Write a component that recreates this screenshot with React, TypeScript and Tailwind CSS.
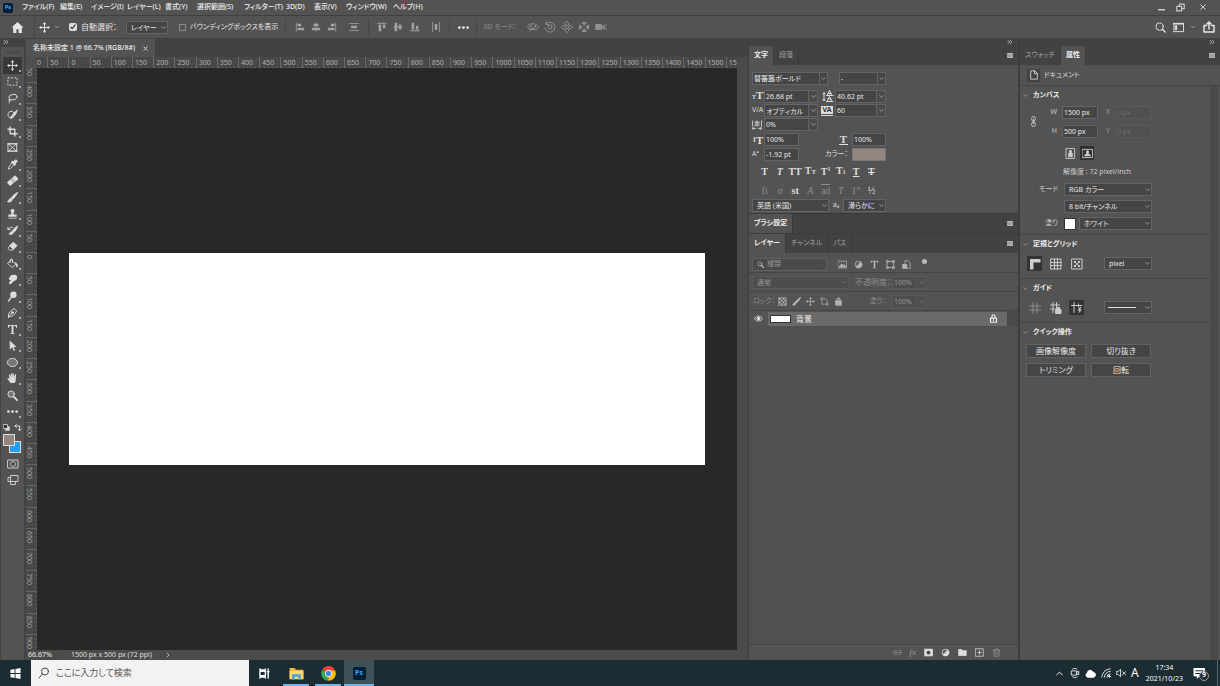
import type { ReactNode } from 'react'
import { ChevronDown, ChevronRight, ChevronUp, ChevronsRight, Link2, Trash2 } from 'lucide-react'

type IconProps = { children: ReactNode; className?: string }

// stroked icon on a 24 grid; shapes can opt in to fill with fill="currentColor"
function Icon({ children, className = 'size-[12px]' }: IconProps) {
  return (
    <svg
      viewBox="0 0 24 24"
      fill="none"
      stroke="currentColor"
      strokeWidth="2"
      strokeLinecap="round"
      strokeLinejoin="round"
      aria-hidden="true"
      className={`shrink-0 ${className}`}
    >
      {children}
    </svg>
  )
}

const moveShape = (
  <>
    <path d="M12 3v18M3 12h18" />
    <path d="M12 0l4 5H8zM12 24l4-5H8zM0 12l5-4v8zM24 12l-5-4v8z" fill="currentColor" stroke="none" />
  </>
)

const lockShape = (
  <>
    <rect x="4" y="10" width="16" height="12" rx="1" fill="currentColor" />
    <path d="M8 10V7a4 4 0 0 1 8 0v3" strokeWidth="3" />
  </>
)

const halfCircle = (
  <>
    <circle cx="12" cy="12" r="9" />
    <path d="M18.4 5.6A9 9 0 0 1 5.6 18.4z" fill="currentColor" />
  </>
)

const tools: { name: string; shape: ReactNode; more?: boolean }[] = [
  { name: '移動', shape: moveShape, more: true },
  { name: '長方形選択', shape: <rect x="2" y="4" width="20" height="16" strokeDasharray="4 3" strokeLinecap="butt" />, more: true },
  {
    name: 'なげなわ',
    shape: (
      <>
        <ellipse cx="13" cy="9" rx="9" ry="6" transform="rotate(-12 13 9)" />
        <path d="M6 14c-3 0-3 4 0 3.500 2-.5 1-3.500-1-2.500M6 18c1 2-1 3-2 4" />
      </>
    ),
    more: true,
  },
  {
    name: 'クイック選択',
    shape: (
      <>
        <path d="M10 20c-10 0-11-14-1-15 3 0 5 1 6 3" />
        <path d="M22 3c-4 2-8 6-10 10l3 3c3-3 6-8 7-13zM11 14c-2 1-1 4-4 5 4 2 7 0 7-3z" fill="currentColor" />
      </>
    ),
    more: true,
  },
  { name: '切り抜き', shape: <path d="M7 1v16h16M1 7h16v16" strokeWidth="3" strokeLinecap="butt" />, more: true },
  { name: 'フレーム', shape: <path d="M3 4h18v16H3zM3 4l18 16M21 4L3 20M1 4h22M1 20h22" /> },
  {
    name: 'スポイト',
    shape: (
      <>
        <path d="M13 7l4 4L7 21l-4 1 1-4z" />
        <path d="M12 5l2 1 3-3c3-3 7 1 4 4l-3 3 1 2-2 2-7-7z" fill="currentColor" />
      </>
    ),
    more: true,
  },
  {
    name: '修復ブラシ',
    shape: (
      <>
        <rect x="0" y="7" width="24" height="11" rx="2" transform="rotate(-40 12 12)" fill="currentColor" stroke="none" />
        <path d="M7 8l9 10M10 6l8 10" stroke="#535353" strokeWidth="1" />
      </>
    ),
    more: true,
  },
  {
    name: 'ブラシ',
    shape: <path d="M23 1C17 4 12 9 9 13l3 3c4-4 9-9 11-15zM8 14c-4 0-3 5-7 7 5 2 10 0 10-4z" fill="currentColor" />,
    more: true,
  },
  {
    name: 'スタンプ',
    shape: <path d="M12 2a4 4 0 0 0-3 7c1 2 1 4 0 5H3v5h18v-5h-6c-1-1-1-3 0-5a4 4 0 0 0-3-7zM3 21h18v2H3z" fill="currentColor" stroke="none" />,
    more: true,
  },
  {
    name: 'ヒストリーブラシ',
    shape: (
      <>
        <path d="M23 3c-6 2-9 6-11 10l3 3c4-4 7-8 8-13zM11 14c-4 0-3 4-7 5 4 3 9 1 10-2z" fill="currentColor" />
        <path d="M2 5v5h5M3 9c2-4 6-5 9-4" />
      </>
    ),
    more: true,
  },
  {
    name: '消しゴム',
    shape: (
      <>
        <path d="M14 3l8 7-8 8-8-7z" fill="currentColor" />
        <path d="M6 11l-4 5 4 4h5l3-2" />
      </>
    ),
    more: true,
  },
  {
    name: '塗りつぶし',
    shape: (
      <>
        <path d="M10 5l9 9-8 7-9-9zM7 10V4c0-3 5-3 5 0v5" />
        <path d="M19 11c5 2 4 7 3 9-2-1-2-5-3-9z" fill="currentColor" />
      </>
    ),
    more: true,
  },
  {
    name: '指先',
    shape: <path d="M4 10c2-4 6-9 9-8 4-1 8 0 9 4 1 5-3 9-7 9l-6 6c-3 3-6 0-4-3l4-5c-2 1-5 0-5-3z" fill="currentColor" stroke="none" />,
    more: true,
  },
  {
    name: '覆い焼き',
    shape: (
      <>
        <circle cx="14" cy="8" r="7" fill="currentColor" stroke="none" />
        <path d="M10 13l-7 9" strokeWidth="3" />
      </>
    ),
    more: true,
  },
  {
    name: 'ペン',
    shape: (
      <>
        <path d="M3 22c0-7 2-12 7-15l6-4 5 6-4 6c-3 4-8 6-14 7zM4 21l7-8" />
        <circle cx="12" cy="12" r="2" fill="currentColor" />
      </>
    ),
    more: true,
  },
  { name: '文字', shape: <path d="M2 2h20v6h-2c0-3-2-4-6-4v15c0 1 1 2 3 2v1H7v-1c2 0 3-1 3-2V4C6 4 4 5 4 8H2z" fill="currentColor" stroke="none" />, more: true },
  { name: 'パス選択', shape: <path d="M6 1v20l5-5 4 8 3-2-4-7h7z" fill="currentColor" stroke="none" />, more: true },
  { name: '楕円形', shape: <ellipse cx="12" cy="12" rx="11" ry="9" fill="#777777" />, more: true },
  {
    name: '手のひら',
    shape: (
      <path
        d="M8 22C5 18 2 15 1 12c1-2 3-1 5 2L4 5c0-2 3-2 3 0l2 6-1-9c0-2 3-2 3 0l1 9V2c0-2 3-2 3 0v9l2-7c1-2 3-1 3 1l-1 9c0 4-1 6-3 8z"
        fill="currentColor"
        stroke="none"
      />
    ),
    more: true,
  },
  {
    name: 'ズーム',
    shape: (
      <>
        <circle cx="9" cy="9" r="7" fill="#777777" />
        <path d="M15 15l7 7" strokeWidth="4" />
      </>
    ),
  },
  {
    name: 'その他',
    shape: (
      <g fill="currentColor" stroke="none">
        <circle cx="3" cy="12" r="3" />
        <circle cx="12" cy="12" r="3" />
        <circle cx="21" cy="12" r="3" />
      </g>
    ),
    more: true,
  },
]

const menus = ['ファイル(F)', '編集(E)', 'イメージ(I)', 'レイヤー(L)', '書式(Y)', '選択範囲(S)', 'フィルター(T)', '3D(D)', '表示(V)', 'ウィンドウ(W)', 'ヘルプ(H)']

const field = 'h-[13px] border border-[#646464] bg-[#454545] text-[7px] leading-[11px] text-[#e6e6e6] outline-none'

type SelectProps = { label: string; value: string; className?: string; muted?: boolean; split?: boolean }

function Select({ label, value, className = '', muted = false, split = false }: SelectProps) {
  return (
    <span className={`relative block ${muted ? 'opacity-40' : ''} ${className}`}>
      <select
        aria-label={label}
        disabled={muted}
        className={`${field} block w-full appearance-none pr-2 disabled:opacity-100 ${split ? 'pl-px' : 'pl-1'}`}
      >
        <option>{value}</option>
      </select>
      <span className={`pointer-events-none absolute inset-y-px right-px flex w-[8px] items-center justify-center ${split ? 'border-l border-[#646464]' : ''}`}>
        <ChevronDown className="size-[7px] text-[#cccccc]" />
      </span>
    </span>
  )
}

function Combo({ label, value, className = '', muted = false }: { label: string; value: string; className?: string; muted?: boolean }) {
  return (
    <span className={`flex ${muted ? 'opacity-40' : ''} ${className}`}>
      <input aria-label={label} defaultValue={value} disabled={muted} className={`${field} w-0 flex-1 px-px`} />
      <button aria-label={`${label}の候補`} disabled={muted} className="flex h-[13px] w-[9px] items-center justify-center border border-l-0 border-[#646464] bg-[#4b4b4b]">
        <ChevronDown className="size-[7px] text-[#cccccc]" />
      </button>
    </span>
  )
}

function PanelMenu() {
  return (
    <button aria-label="パネルメニュー" className="mr-[5px] h-[5px] w-[6px] border-y border-[#b5b5b5] bg-[#a0a0a0]" />
  )
}

function Tabs({ items, active }: { items: string[]; active: number }) {
  return (
    <div className="flex h-[19px] shrink-0 items-center justify-between bg-[#424242]">
      <div role="tablist" className="flex h-full">
        {items.map((item, i) => (
          <button
            key={item}
            role="tab"
            aria-selected={i === active}
            className={`h-full border-r border-[#3a3a3a] px-[5px] text-[7px] ${i === active ? 'bg-[#535353] font-semibold text-[#eeeeee]' : 'text-[#a0a0a0]'}`}
          >
            {item}
          </button>
        ))}
      </div>
      <PanelMenu />
    </div>
  )
}

function MenuBar() {
  return (
    <header className="flex h-[16px] shrink-0 items-center border-b border-[#404040] bg-[#535353]">
      <span className="ml-[3px] flex size-[10px] items-center justify-center rounded-[2px] bg-[#001e36] text-[6px] font-bold text-[#31a8ff]">Ps</span>
      <nav className="ml-[9px] grid grid-cols-[38px_31px_36px_38px_32px_47px_42px_28px_32px_47px_40px] text-[7px] font-medium text-[#eeeeee]">
        {menus.map((menu) => (
          <button key={menu} className="whitespace-nowrap text-left">
            {menu}
          </button>
        ))}
      </nav>
      <div className="mr-[4px] ml-auto flex text-[#cccccc]">
        <button aria-label="最小化" className="flex w-[18px] justify-center">
          <Icon className="size-[9px]"><path d="M4 18h16" strokeWidth="4" /></Icon>
        </button>
        <button aria-label="元に戻す" className="flex w-[20px] justify-center">
          <Icon className="size-[9px]"><path d="M2 9h13v12H2zM9 9V3h13v12h-7" strokeWidth="3" /></Icon>
        </button>
        <button aria-label="閉じる" className="flex w-[26px] justify-center">
          <Icon className="size-[8px]"><path d="M5 5l14 14M19 5L5 19" strokeWidth="3" /></Icon>
        </button>
      </div>
    </header>
  )
}

const alignIcons: { name: string; width: string; shape: ReactNode }[] = [
  { name: '左揃え', width: 'w-[16px]', shape: <path d="M2 1h2v22H2zM6 4h9v6H6zM6 14h16v6H6z" /> },
  { name: '水平中央', width: 'w-[16px]', shape: <path d="M11 1h2v22h-2zM6 4h12v6H6zM2 14h20v6H2z" /> },
  { name: '右揃え', width: 'w-[16px]', shape: <path d="M20 1h2v22h-2zM9 4h9v6H9zM2 14h16v6H2z" /> },
  { name: '水平分布', width: 'w-[28px]', shape: <path d="M0 3h24v2H0zM5 9h14v6H5zM0 19h24v2H0z" /> },
]

const verticalIcons: { name: string; width: string; shape: ReactNode }[] = [
  { name: '上揃え', width: 'w-[16px]', shape: <path d="M1 2h22v2H1zM4 6h6v16H4zM14 6h6v9h-6z" /> },
  { name: '垂直中央', width: 'w-[16px]', shape: <path d="M1 11h22v2H1zM4 2h6v20H4zM14 6h6v12h-6z" /> },
  { name: '下揃え', width: 'w-[17px]', shape: <path d="M1 20h22v2H1zM4 2h6v16H4zM14 9h6v9h-6z" /> },
  { name: '垂直分布', width: 'w-[26px]', shape: <path d="M3 0h2v24H3zM9 5h6v14H9zM19 0h2v24h-2z" /> },
]

function AlignGroup({ items }: { items: typeof alignIcons }) {
  return (
    <div className="flex text-[#a2a2a2]">
      {items.map(({ name, width, shape }) => (
        <button key={name} aria-label={name} className={`flex justify-center ${width}`}>
          <Icon className="size-[10px]"><g fill="currentColor" stroke="none">{shape}</g></Icon>
        </button>
      ))}
    </div>
  )
}

function OptionsBar() {
  return (
    <div className="flex h-[22px] shrink-0 items-center bg-[#535353] text-[#e6e6e6]">
      <button aria-label="ホーム" className="ml-[11px] w-[23px]">
        <Icon className="size-[13px]"><path d="M12 2L1 12h3v10h6v-7h4v7h6V12h3z" fill="currentColor" stroke="none" /></Icon>
      </button>
      <i className="h-full w-px bg-[#464646]" />
      <button aria-label="移動ツール" className="ml-[4px] flex w-[21px] items-center justify-between">
        <Icon className="size-[11px]">{moveShape}</Icon>
        <ChevronDown className="size-[6px]" />
      </button>
      <label className="ml-[9px] flex items-center gap-1 text-[8px]">
        <input type="checkbox" defaultChecked className="size-[8px] accent-[#e0e0e0]" />
        自動選択：
      </label>
      <Select label="自動選択の対象" value="レイヤー" className="ml-[9px] w-[42px]" />
      <label className="ml-[11px] flex items-center gap-1 text-[7px]">
        <input type="checkbox" className="size-[7px] appearance-none border border-[#8a8a8a]" />
        バウンディングボックスを表示
      </label>
      <i className="mr-[6px] ml-[7px] h-4 w-px bg-[#464646]" />
      <AlignGroup items={alignIcons} />
      <i className="mr-[5px] h-4 w-px bg-[#464646]" />
      <AlignGroup items={verticalIcons} />
      <i className="h-4 w-px bg-[#464646]" />
      <button aria-label="その他のオプション" className="flex w-[26px] justify-center">
        <Icon className="size-[11px]">{tools[21].shape}</Icon>
      </button>
      <i className="h-4 w-px bg-[#464646]" />
      <span className="ml-[6px] w-[41px] text-[7px] whitespace-nowrap text-[#8e8e8e]">3D モード：</span>
      <div className="ml-[3px] flex gap-[5px] text-[#8e8e8e]">
        <Icon>
          <circle cx="12" cy="10" r="5" />
          <path d="M6 6C0 8 0 16 7 17h10c7-1 7-8 2-9M5 14l3 3-3 3" />
        </Icon>
        <Icon>
          <circle cx="12" cy="12" r="4" />
          <path d="M4 6a10 10 0 1 1-2 8M4 2v5h5" />
        </Icon>
        <Icon>
          <path d="M12 1l4 5-4 4-4-4zM12 23l4-5-4-4-4 4zM1 12l5-4 4 4-4 4zM23 12l-5-4-4 4 4 4z" />
        </Icon>
        <Icon>
          <path d="M12 8L8 3h8zM12 16l-4 5h8zM8 12L3 8v8zM16 12l5-4v8z" fill="currentColor" />
        </Icon>
        <Icon>
          <path d="M1 7h12v10H1z" fill="currentColor" />
          <path d="M15 12l3-4v8zM23 6l-3 4M23 18l-3-4" fill="currentColor" />
        </Icon>
      </div>
      <div className="mr-[5px] ml-auto flex items-center gap-[7px]">
        <button aria-label="検索">
          <Icon className="size-[11px]"><circle cx="10" cy="10" r="8" /><path d="M16 16l6 6" strokeWidth="3" /></Icon>
        </button>
        <button aria-label="ワークスペース" className="flex items-center gap-[6px]">
          <Icon className="size-[11px]"><path d="M1 3h22v18H1z" /><path d="M5 8h3v9H5z" fill="currentColor" /><path d="M1 4h22" strokeWidth="3" /></Icon>
          <ChevronDown className="size-[6px]" />
        </button>
        <button aria-label="共有">
          <Icon className="size-[12px]"><path d="M7 9H2v13h20V9h-5M12 16V2M8 6l4-4 4 4" strokeWidth="3" /></Icon>
        </button>
      </div>
    </div>
  )
}

function Toolbar() {
  return (
    <aside className="flex w-[26px] shrink-0 flex-col border-r-2 border-l border-[#444444] bg-[#535353]">
      <div className="h-[9px] bg-[#424242] text-[#dddddd]"><ChevronsRight className="ml-px size-[8px]" /></div>
      <div className="flex h-[10px] items-center justify-center"><i className="h-[3px] w-[14px] bg-[#4b4b4b]" /></div>
      <div className="flex h-[363px] flex-col items-center">
        {tools.map(({ name, shape, more }, i) => (
          <button
            key={name}
            aria-label={name}
            className={`relative flex w-[19px] flex-1 items-center justify-center text-[#dddddd] ${i === 0 ? 'bg-[#383838]' : ''}`}
          >
            <Icon className="size-[11px]">{shape}</Icon>
            {more && <i className="absolute right-px bottom-[2px] size-[2px] bg-[#aaaaaa]" />}
          </button>
        ))}
      </div>
      <div className="mt-[3px] flex h-[9px] items-center justify-around text-[#dddddd]">
        <Icon className="size-[7px]"><path d="M9 9h13v13H9z" fill="currentColor" /><path d="M2 2h13v13H2z" fill="#222222" strokeWidth="3" /></Icon>
        <Icon className="size-[8px]"><path d="M3 6h14v13M7 2L3 6l4 4M13 16l4 4 4-4" strokeWidth="3" /></Icon>
      </div>
      <div className="relative mt-[2px] ml-[2px] h-[19px] w-[18px]">
        <button aria-label="背景色" className="absolute right-0 bottom-0 size-[12px] border border-[#dddddd] bg-[#1ea0f5]" />
        <button aria-label="描画色" className="absolute top-0 left-0 size-[12px] border border-[#dddddd] bg-[#93857f]" />
      </div>
      <button aria-label="クイックマスク" className="mt-[4px] flex h-[14px] items-center justify-center text-[#cccccc]">
        <Icon><path d="M2 4h20v16H2z" /><circle cx="12" cy="12" r="5" strokeDasharray="3 2" /></Icon>
      </button>
      <button aria-label="スクリーンモード" className="mt-[2px] flex h-[14px] items-center justify-center text-[#cccccc]">
        <Icon><path d="M7 15H2V7h5M8 3h14v12H8zM7 12v9h10v-5" /></Icon>
      </button>
    </aside>
  )
}

const columns = Array.from({ length: 34 }, (_, i) => Math.abs((i - 2) * 50))
const rows = Array.from({ length: 28 }, (_, i) => Math.abs((i - 9) * 50))

function Document() {
  return (
    <main className="flex min-w-0 flex-1 flex-col bg-[#424242]">
      <div className="flex h-[19px] shrink-0 items-end">
        <div role="tab" aria-selected="true" className="flex h-[18px] items-center gap-[8px] bg-[#535353] pr-[7px] pl-[7px] text-[7px] font-medium text-[#eeeeee]">
          <span className="whitespace-nowrap">名称未設定 1 @ 66.7% (RGB/8#)</span>
          <button aria-label="タブを閉じる"><Icon className="size-[5px]"><path d="M4 4l16 16M20 4L4 20" strokeWidth="4" /></Icon></button>
        </div>
      </div>
      <div className="flex min-h-0 flex-1">
        <div className="flex min-w-0 flex-1 flex-col">
          <div className="flex h-[11px] shrink-0 bg-[#484848] text-[7px] leading-[11px] text-[#b0b0b0]">
            <span className="w-[11px] shrink-0 bg-[#505050]" />
            <div className="flex-1 overflow-hidden">
              <div className="-ml-[11px] flex w-[721px]">
                {columns.map((n, i) => (
                  <span key={i} className="w-0 flex-1 border-l border-[#6a6a6a] pl-[2px] [background:repeating-linear-gradient(90deg,#6a6a6a_0_1px,transparent_1px_4px)_left_bottom/100%_1px_no-repeat]">
                    {n}
                  </span>
                ))}
              </div>
            </div>
          </div>
          <div className="flex min-h-0 flex-1">
            <div className="w-[11px] shrink-0 overflow-hidden bg-[#484848]">
              <div className="-mt-[7px] flex h-[594px] flex-col text-[7px] leading-[9px] text-[#a0a0a0]">
                {rows.map((n, i) => (
                  <span
                    key={i}
                    className="h-0 flex-1 border-t border-[#666666] pt-[2px] pr-[3px] [writing-mode:vertical-rl] [background:repeating-linear-gradient(180deg,#6a6a6a_0_1px,transparent_1px_4px)_right_top/1px_100%_no-repeat]"
                  >
                    {n}
                  </span>
                ))}
              </div>
            </div>
            <div className="flex min-w-0 flex-1 items-center justify-center bg-[#282828]">
              <div className="h-[212px] w-[636px] bg-white" />
            </div>
          </div>
        </div>
        <div className="w-[11px] shrink-0 bg-[#4a4a4a]" />
      </div>
      <footer className="flex h-[10px] shrink-0 items-center bg-[#4b4b4b] text-[7px] leading-[10px] text-[#dddddd]">
        <span className="w-[45px] pl-[2px] font-medium">66.67%</span>
        <span>1500 px x 500 px (72 ppi)</span>
        <ChevronRight className="ml-[12px] size-[8px]" />
      </footer>
    </main>
  )
}

const glyph = "font-['Liberation_Serif',serif]"

function CharacterPanel() {
  return (
    <section className="flex h-[148px] shrink-0 flex-col px-[3px] pt-[7px] text-[7px] text-[#dddddd]">
      <div className="mb-[4px] flex gap-[11px]">
        <Select label="フォント" value="替蕃蕗ボールド" className="w-[76px]" split />
        <Select label="スタイル" value=" - " className="w-[47px]" split />
      </div>
      <div className="grid grid-cols-[12px_54px_17px_51px] items-center gap-y-px">
        <span className={`${glyph} text-[11px] leading-[12px] font-bold`}><small className="text-[6px]">T</small>T</span>
        <Combo label="サイズ" value="26.68 pt" />
        <Icon className="ml-[4px] size-[12px]"><path d="M4 6v15M2 8l2-3 2 3M2 19l2 3 2-3M11 10l4-9 4 9M12 7h6M11 21l4-8 4 8M12 18h6M9 11h13M9 23h13" /></Icon>
        <Combo label="行送り" value="40.62 pt" />
        <span className="text-[7px]">V/A</span>
        <Combo label="カーニング" value="オプティカル" />
        <span className="mr-[2px] ml-[3px] border-b border-[#dddddd] pb-px"><span className="block bg-[#dddddd] text-center text-[7px] leading-[8px] font-bold text-[#333333]">VA</span></span>
        <Combo label="トラッキング" value="60" />
        <Icon className="size-[10px]"><path d="M1 2v13M23 2v13M6 5h12M12 2v12M7 13c0-8 11-7 10-2s-8 3-8 0M1 20h8M15 20h8M4 17l-3 3 3 3M20 17l3 3-3 3" /></Icon>
        <Combo label="ツメ" value="0%" />
      </div>
      <div className="mt-[2px] grid w-[134px] grid-cols-[12px_36px_52px_34px] items-center gap-y-[2px]">
        <span className="flex items-center"><Icon className="-mr-px size-[5px]"><path d="M12 2v20M7 6l5-5 5 5M7 18l5 5 5-5" strokeWidth="4" /></Icon><b className={`${glyph} text-[11px] leading-3`}>T</b></span>
        <input aria-label="垂直比率" defaultValue="100%" className={`${field} w-[35px] px-px`} />
        <b className={`${glyph} mr-[4px] justify-self-end border-b border-[#dddddd] px-px text-[11px] leading-[10px]`}>T</b>
        <input aria-label="水平比率" defaultValue="100%" className={`${field} w-full px-px`} />
        <span className="text-[7px]">Aª</span>
        <input aria-label="ベースラインシフト" defaultValue="-1.92 pt" className={`${field} w-[35px] px-px`} />
        <span className="pr-[4px] text-right whitespace-nowrap">カラー：</span>
        <button aria-label="文字色" className="h-[13px] border border-[#777777] bg-[#93857f]" />
      </div>
      <div className={`${glyph} mt-[3px] grid w-[127px] grid-cols-8 pl-[5px] text-center text-[10px] leading-[13px] font-bold`}>
        <button>T</button>
        <button className="italic">T</button>
        <button>TT</button>
        <button>T<small className="text-[7px]">T</small></button>
        <button>T<small className="align-super text-[6px] leading-0">1</small></button>
        <button>T<small className="text-[6px]">1</small></button>
        <button className="underline">T</button>
        <button className="line-through">T</button>
      </div>
      <div className={`${glyph} mt-[5px] grid w-[127px] grid-cols-8 pl-[5px] text-center text-[10px] leading-[13px] text-[#8d8d8d]`}>
        <button>fi</button>
        <button className="italic">σ</button>
        <button className="font-bold text-[#dddddd]">st</button>
        <button className="italic">A</button>
        <button className="overline">ad</button>
        <button className="italic">T</button>
        <button>1<small className="align-super text-[6px] leading-0">st</small></button>
        <button className="text-[#dddddd]">½</button>
      </div>
      <div className="mt-[2px] flex items-center">
        <Select label="言語" value="英語 (米国)" className="w-[77px]" />
        <span className="w-[14px] text-center">aₐ</span>
        <Select label="アンチエイリアス" value="滑らかに" className="w-[43px]" />
      </div>
    </section>
  )
}

function LayersPanel() {
  return (
    <section className="flex min-h-0 flex-1 flex-col text-[7px] text-[#8d8d8d]">
      <div className="flex h-[20px] items-center border-b border-[#454545] pt-[4px] pl-[3px]">
        <label className="flex h-[13px] w-[75px] items-center gap-[3px] border border-[#5f5f5f] bg-[#4a4a4a] px-1">
          <Icon className="size-[7px] text-[#cccccc]"><circle cx="10" cy="10" r="7" /><path d="M15 15l7 7" strokeWidth="4" /></Icon>
          <select aria-label="フィルターの種類" className="w-0 flex-1 appearance-none outline-none"><option>種類</option></select>
          <ChevronDown className="size-[6px] opacity-40" />
        </label>
        <div className="ml-[11px] flex gap-[7px] text-[#b8b8b8]">
          <Icon className="size-[9px]"><path d="M1 3h22v18H1z" /><path d="M4 18l6-8 4 5 3-3 4 6z" fill="currentColor" /></Icon>
          <Icon className="size-[9px]">{halfCircle}</Icon>
          <Icon className="size-[9px]">{tools[16].shape}</Icon>
          <Icon className="size-[9px]"><path d="M4 4h16v16H4zM1 1h5v5H1zM18 1h5v5h-5zM1 18h5v5H1zM18 18h5v5h-5z" /></Icon>
          <Icon className="size-[9px]"><path d="M8 10V2h8l6 6v14h-9" /><path d="M2 12h11v10H2z" fill="currentColor" /></Icon>
        </div>
        <span className="mb-[6px] ml-[11px] size-[5px] rounded-full bg-[#b8b8b8]" />
      </div>
      <div className="flex h-[19px] items-center border-b border-[#454545] pl-[3px]">
        <Select label="描画モード" value="通常" className="w-[97px]" muted />
        <span className="w-[43px] pl-[6px] text-[8px] whitespace-nowrap">不透明度：</span>
        <Combo label="不透明度" value="100%" className="w-[34px]" muted />
      </div>
      <div className="flex h-[19px] items-center border-b border-[#454545] pl-[4px]">
        <span className="w-[25px] whitespace-nowrap">ロック：</span>
        <div className="flex gap-[5px] text-[#b0b0b0]">
          <Icon className="size-[9px]"><path d="M2 2h20v20H2z" /><path d="M2 2h5v5H2zM12 2h5v5h-5zM7 7h5v5H7zM17 7h5v5h-5zM2 12h5v5H2zM12 12h5v5h-5zM7 17h5v5H7zM17 17h5v5h-5z" fill="currentColor" stroke="none" /></Icon>
          <Icon className="size-[9px]">{tools[8].shape}</Icon>
          <Icon className="size-[9px]">{moveShape}</Icon>
          <Icon className="size-[9px]"><path d="M5 1v18h18M1 5h14l4 4v14" /></Icon>
          <Icon className="size-[9px]">{lockShape}</Icon>
        </div>
        <span className="w-[49px] pr-[6px] text-right whitespace-nowrap">塗り：</span>
        <Combo label="塗り" value="100%" className="w-[34px]" muted />
      </div>
      <div className="flex h-[15px] items-center">
        <button aria-label="表示の切り替え" className="flex w-[19px] justify-center text-[#e6e6e6]">
          <Icon className="size-[9px]"><path d="M1 12c5-9 17-9 22 0-5 9-17 9-22 0z" /><circle cx="12" cy="12" r="4" fill="currentColor" /></Icon>
        </button>
        <div className="flex h-[14px] flex-1 items-center bg-[#6a6a6a] pr-[9px] pl-[2px] text-[#eeeeee]">
          <span className="h-[8px] w-[21px] border border-[#333333] bg-white" />
          <span className="ml-[5px] text-[8px]">背景</span>
          <Icon className="ml-auto size-[9px]"><path d="M4 11h16v11H4zM8 11V6a4 4 0 0 1 8 0v5M12 15v3" strokeWidth="3" /></Icon>
        </div>
        <span className="h-full w-[11px] bg-[#4a4a4a]" />
      </div>
      <div className="flex-1 bg-[#505050]" />
      <footer className="flex h-[16px] items-center justify-end gap-[8px] border-t border-[#454545] pr-[17px] text-[#dddddd]">
        <button aria-label="リンク" className="text-[#9a9a9a]"><Link2 className="size-[9px]" /></button>
        <button className={`${glyph} text-[9px] text-[#9a9a9a] italic`}>fx</button>
        <button aria-label="マスク"><Icon className="size-[9px]"><path d="M1 3h22v18H1z" fill="currentColor" /><circle cx="12" cy="12" r="5" fill="#444444" stroke="none" /></Icon></button>
        <button aria-label="調整"><Icon className="size-[9px]">{halfCircle}</Icon></button>
        <button aria-label="グループ"><Icon className="size-[9px]"><path d="M2 4h8l2 3h10v13H2z" fill="currentColor" /></Icon></button>
        <button aria-label="新規"><Icon className="size-[9px]"><path d="M2 2h20v20H2zM12 7v10M7 12h10" /></Icon></button>
        <button aria-label="削除" className="text-[#9a9a9a]"><Trash2 className="size-[9px]" /></button>
      </footer>
    </section>
  )
}

function Section({ title, children }: { title: string; children: ReactNode }) {
  return (
    <section className="border-b border-[#464646] pb-[4px] last:border-b-0">
      <h2 className="flex h-[18px] items-center gap-[4px] pl-[2px] text-[7px] font-bold text-[#eeeeee]">
        <ChevronDown className="size-[7px] text-[#bbbbbb]" />
        {title}
      </h2>
      {children}
    </section>
  )
}

function SizeField({ label, value, disabled = false }: { label: string; value: string; disabled?: boolean }) {
  return (
    <label className={`flex items-center justify-end gap-[5px] ${disabled ? 'text-[#999999]' : ''}`}>
      {label}
      <input
        defaultValue={value}
        disabled={disabled}
        className={`${field} w-[36px] px-px disabled:border-[#5a5a5a] disabled:bg-[#505050] disabled:text-[#6c6c6c]`}
      />
    </label>
  )
}

function PropertiesPanel() {
  return (
    <aside className="flex w-[200px] shrink-0 flex-col bg-[#535353]">
      <div className="flex h-[8px] shrink-0 justify-end bg-[#424242] pr-[4px] text-[#dddddd]"><ChevronsRight className="size-[8px]" /></div>
      <Tabs items={['スウォッチ', '属性']} active={1} />
      <div className="flex h-[21px] shrink-0 items-center gap-[4px] border-b border-[#464646] pl-[7px] text-[7px] text-[#dddddd]">
        <span className="flex size-[13px] items-center justify-center bg-[#424242]">
          <Icon className="size-[10px]"><path d="M5 2h9l6 6v14H5zM13 2v7h7" /></Icon>
        </span>
        ドキュメント
      </div>
      <div className="flex min-h-0 flex-1 text-[7px] text-[#cccccc]">
        <div className="flex-1">
          <Section title="カンバス">
            <div className="flex items-center">
              <Icon className="mr-[10px] ml-[8px] size-[11px]"><rect x="8" y="1" width="8" height="10" rx="4" /><rect x="8" y="13" width="8" height="10" rx="4" /><path d="M12 7v10" /></Icon>
              <div className="grid grid-cols-[49px_45px] gap-x-[8px] gap-y-[6px] pt-[2px]">
                <SizeField label="W" value="1500 px" />
                <SizeField label="X" value="0 px" disabled />
                <SizeField label="H" value="500 px" />
                <SizeField label="Y" value="0 px" disabled />
              </div>
            </div>
            <div className="mt-[8px] flex gap-[3px] pl-[43px]">
              <button aria-label="縦長" className="flex size-[14px] items-center justify-center"><Icon className="size-[11px]"><path d="M3 1h18v22H3z" /><path d="M12 4a4 4 0 0 1 2 7h3v9H7v-9h3a4 4 0 0 1 2-7z" fill="currentColor" stroke="none" /></Icon></button>
              <button aria-label="横長" className="flex size-[14px] items-center justify-center bg-[#2f2f2f]"><Icon className="size-[11px]"><path d="M1 3h22v18H1z" /><path d="M12 5a4 4 0 0 1 2 7l5 3v3H5v-3l5-3a4 4 0 0 1 2-7z" fill="currentColor" stroke="none" /></Icon></button>
            </div>
            <p className="mt-[7px] pl-[43px] leading-[10px]">解像度 : 72 pixel/inch</p>
            <div className="mt-[6px] grid grid-cols-[38px_88px] items-center gap-x-[6px] gap-y-[4px]">
              <span className="text-right">モード</span>
              <Select label="モード" value="RGB カラー" />
              <span />
              <Select label="ビット数" value="8 bit/チャンネル" />
              <span className="text-right">塗り</span>
              <div className="flex items-center gap-[3px]">
                <button aria-label="塗りの色" className="size-[12px] border border-[#333333] bg-white" />
                <Select label="塗りの種類" value="ホワイト" className="flex-1" />
              </div>
            </div>
          </Section>
          <Section title="定規とグリッド">
            <div className="flex h-[21px] items-center pl-[7px]">
              <div className="flex gap-[6px]">
                <button aria-label="定規" className="flex size-[15px] items-center justify-center bg-[#333333]"><Icon className="size-[12px]"><path d="M2 2h21v7H9v14H2z" fill="currentColor" stroke="none" /></Icon></button>
                <button aria-label="グリッド" className="flex size-[15px] items-center justify-center"><Icon className="size-[12px]"><path d="M2 2h20v20H2zM9 2v20M15 2v20M2 9h20M2 15h20" /></Icon></button>
                <button aria-label="透明グリッド" className="flex size-[15px] items-center justify-center"><Icon className="size-[12px]"><path d="M2 2h20v20H2z" /><path d="M6 6h4v4H6zM14 6h4v4h-4zM10 10h4v4h-4zM6 14h4v4H6zM14 14h4v4h-4z" fill="currentColor" stroke="none" /></Icon></button>
              </div>
              <Select label="単位" value="pixel" className="ml-[20px] w-[48px]" />
            </div>
          </Section>
          <Section title="ガイド">
            <div className="flex h-[21px] items-center pl-[7px]">
              <div className="flex gap-[6px]">
                <button aria-label="ガイドを表示" className="flex size-[15px] items-center justify-center text-[#8d8d8d]"><Icon><path d="M8 2v20M16 2v20M1 8h22M1 16h22" /></Icon></button>
                <button aria-label="ガイドをロック" className="flex size-[15px] items-center justify-center"><Icon><path d="M6 1v20M13 1v12M1 6h18M1 14h9" /><path d="M12 15h10v8H12zM15 15v-4h4v4" fill="currentColor" /></Icon></button>
                <button aria-label="スマートガイド" className="flex size-[15px] items-center justify-center bg-[#333333]"><Icon><path d="M6 1v20M1 7h21M15 4v6" /><path d="M18 10l-5 7h4l-2 6 7-8h-4l3-5z" fill="currentColor" stroke="none" /></Icon></button>
              </div>
              <div className="relative ml-[20px] w-[48px]">
                <Select label="ガイドの線種" value="" />
                <i className="pointer-events-none absolute top-[6px] left-[4px] h-px w-[28px] bg-[#dddddd]" />
              </div>
            </div>
          </Section>
          <Section title="クイック操作">
            <div className="mt-[3px] grid grid-cols-[60px_60px] gap-x-[5px] gap-y-[5px] pl-[6px] text-[#e6e6e6]">
              {['画像解像度', '切り抜き', 'トリミング', '回転'].map((action) => (
                <button key={action} className="h-[14px] border border-[#626262] bg-[#454545] text-[8px] leading-[12px]">{action}</button>
              ))}
            </div>
          </Section>
        </div>
        <div className="mr-[2px] w-[8px] bg-[#4a4a4a]" />
      </div>
    </aside>
  )
}

function Taskbar() {
  return (
    <footer className="flex h-[26px] shrink-0 items-center bg-[#1b2c32] text-white">
      <button aria-label="スタート" className="flex w-[31px] justify-center">
        <Icon className="size-[11px]"><path d="M1 4l9-2v9H1zM12 2l11-2v11H12zM1 13h9v9l-9-2zM12 13h11v11l-11-2z" fill="currentColor" stroke="none" /></Icon>
      </button>
      <label className="flex h-full w-[218px] items-center gap-[6px] bg-[#f2f2f2] pl-[7px] text-[#444444]">
        <Icon className="size-[12px]"><circle cx="14" cy="9" r="7" /><path d="M9 14l-7 8" /></Icon>
        <input aria-label="検索" placeholder="ここに入力して検索" className="w-0 flex-1 text-[9px] outline-none placeholder:text-[#555555]" />
      </label>
      <button aria-label="タスクビュー" className="flex w-[31px] justify-center">
        <Icon className="size-[11px]"><path d="M2 7h12v10H2zM2 2v2h12V2M2 22v-2h12v2M20 2v20M18 8h4" strokeWidth="3" /></Icon>
      </button>
      <button aria-label="エクスプローラー" className="mx-[3px] flex h-full w-[26px] items-center justify-center border-b-2 border-[#6fb5ea] pt-[2px]">
        <svg viewBox="0 0 24 24" className="size-[15px]">
          <path d="M1 3h8l2 3h12v15H1z" fill="#f5b93c" />
          <path d="M1 8h22v13H1z" fill="#ffd968" />
          <path d="M5 13h14v9h-4v-5H9v5H5z" fill="#4a9fe0" />
        </svg>
      </button>
      <button aria-label="Chrome" className="mx-[3px] flex h-full w-[26px] items-center justify-center border-b-2 border-[#6fb5ea] pt-[2px]">
        <svg viewBox="0 0 24 24" className="size-[15px]">
          <path d="M12 12L2 6a11.500 11.500 0 0 1 20.500 1z" fill="#ea4335" />
          <path d="M12 12L2 6a11.500 11.500 0 0 0 9.500 17.500z" fill="#34a853" />
          <path d="M12 12l-.5 11.500A11.500 11.500 0 0 0 22.500 7H12z" fill="#fbbc05" />
          <circle cx="12" cy="12" r="5.500" fill="#ffffff" />
          <circle cx="12" cy="12" r="4.300" fill="#4285f4" />
        </svg>
      </button>
      <button aria-label="Photoshop" className="flex h-full w-[30px] items-center justify-center border-b-2 border-[#6fb5ea] bg-[#3e5159] pt-[2px]">
        <span className="flex size-[13px] items-center justify-center rounded-[2px] bg-[#001e36] text-[7px] font-bold text-[#31a8ff]">Ps</span>
      </button>
      <div className="ml-auto flex h-full items-center">
        <div className="flex items-center gap-[5px]">
          <ChevronUp className="size-[11px]" />
          <Icon className="size-[10px]"><path d="M4 7h12v10H4zM16 10l5-2v8l-5-2M6 3c4-3 8-3 11 0M6 21c4 3 8 3 11 0" /></Icon>
          <Icon className="size-[11px]"><path d="M5 20a5 5 0 0 1 0-9c1-7 9-8 12-2 7 0 8 10 2 11z" fill="currentColor" /></Icon>
          <Icon className="size-[10px]"><path d="M2 22A20 20 0 0 1 22 2M8 22A14 14 0 0 1 22 8M14 22a8 8 0 0 1 8-8" /><circle cx="20" cy="20" r="2" fill="currentColor" /></Icon>
          <Icon className="size-[10px]"><path d="M1 9h4l6-6v18l-6-6H1zM16 9l7 7M23 9l-7 7" /></Icon>
          <span className="text-[12px]">A</span>
        </div>
        <time className="ml-[7px] text-center text-[7px] leading-[11px]">
          17:34
          <br />
          2021/10/23
        </time>
        <button aria-label="通知" className="relative ml-[10px]">
          <Icon className="size-[13px]"><path d="M1 2h21v15H12l-5 5v-5H1z" fill="currentColor" stroke="none" /><path d="M5 7h13M5 12h13" stroke="#1b2c32" /></Icon>
          <span className="absolute top-[4px] left-[6px] flex size-[10px] items-center justify-center rounded-full border border-[#999999] bg-[#1b2c32] text-[7px] font-bold">9</span>
        </button>
        <i className="mr-[2px] ml-[11px] h-full w-px bg-[#53666d]" />
      </div>
    </footer>
  )
}

export default function App() {
  return (
    <div className="flex h-screen flex-col overflow-hidden bg-[#424242] font-['Noto_Sans','Noto_Sans_CJK_JP',sans-serif] [font-feature-settings:'palt']">
      <MenuBar />
      <OptionsBar />
      <div className="flex min-h-0 flex-1">
        <Toolbar />
        <Document />
        <aside className="flex w-[272px] shrink-0 flex-col border-r-2 border-l border-[#3d3d3d] bg-[#535353]">
          <div className="flex h-[8px] shrink-0 justify-end bg-[#424242] pr-[4px] text-[#dddddd]"><ChevronsRight className="size-[8px]" /></div>
          <Tabs items={['文字', '段落']} active={0} />
          <CharacterPanel />
          <div className="border-y border-[#3a3a3a]">
            <Tabs items={['ブラシ設定']} active={0} />
          </div>
          <Tabs items={['レイヤー', 'チャンネル', 'パス']} active={0} />
          <LayersPanel />
        </aside>
        <PropertiesPanel />
      </div>
      <Taskbar />
    </div>
  )
}
